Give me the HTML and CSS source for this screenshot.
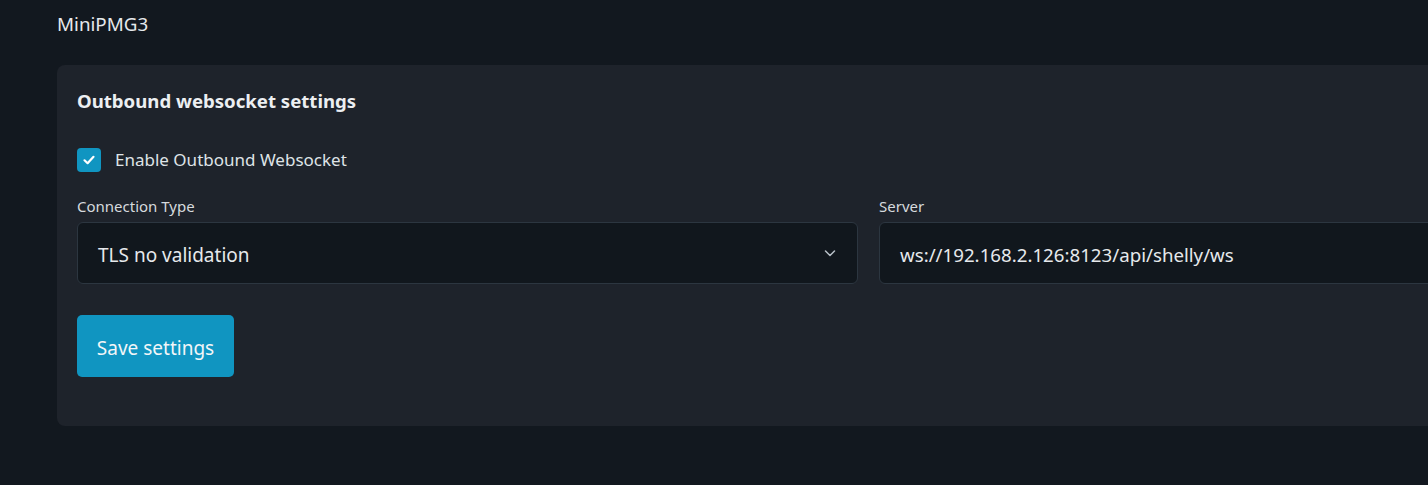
FILE: index.html
```html
<!DOCTYPE html>
<html>
<head>
<meta charset="utf-8">
<link rel="stylesheet" href="styles.css">
</head>
<body>
<main class="page">
  <h1 class="device-name">MiniPMG3</h1>
  <article class="card">
    <h2 class="card-title">Outbound websocket settings</h2>
    <label class="check">
      <span class="check-box">
        <svg width="14" height="14" viewBox="0 0 14 14"><path d="M2.5 7.3 L5.6 10.2 L11.5 3.8" fill="none" stroke="#fff" stroke-width="2.2" stroke-linecap="round" stroke-linejoin="round"/></svg>
      </span>
      <span class="check-label">Enable Outbound Websocket</span>
    </label>
    <div class="grid">
      <div class="field">
        <div class="field-label">Connection Type</div>
        <div class="control select">
          <span>TLS no validation</span>
          <svg class="chev" width="14" height="14" viewBox="0 0 14 14"><path d="M2.5 5 L7 9.5 L11.5 5" fill="none" stroke="#b8c0c8" stroke-width="1.5" stroke-linecap="round" stroke-linejoin="round"/></svg>
        </div>
      </div>
      <div class="field">
        <div class="field-label">Server</div>
        <div class="control server">
          <span>ws://192.168.2.126:8123/api/shelly/ws</span>
        </div>
      </div>
    </div>
    <button class="btn">Save settings</button>
  </article>
</main>
</body>
</html>
```

FILE: styles.css
```css
html, body {
  margin: 0;
  padding: 0;
  background: #12181f;
}
body {
  font-family: "Noto Sans", "Open Sans", sans-serif;
  color: #e3e6ea;
}
.page {
  padding: 0 0 0 57px;
  width: 1428px;
  height: 485px;
  box-sizing: border-box;
  overflow: hidden;
}
.device-name {
  margin: 0;
  font-size: 18.8px;
  font-weight: 400;
  line-height: 24px;
  padding-top: 12px;
  height: 65px;
  box-sizing: border-box;
  color: #e6e9ec;
}
.card {
  width: 1623px;
  box-sizing: border-box;
  background: #1e232b;
  border-radius: 8px;
  padding: 24px 20px 49px 20px;
}
.card-title {
  margin: 0;
  font-size: 18.6px;
  font-weight: 700;
  line-height: 24px;
  color: #eceff2;
}
.check {
  display: flex;
  align-items: center;
  gap: 14px;
  margin-top: 35px;
}
.check-box {
  width: 24px;
  height: 24px;
  border-radius: 4px;
  background: #1095c1;
  display: flex;
  align-items: center;
  justify-content: center;
}
.check-label {
  font-size: 17px;
  line-height: 24px;
  color: #dfe3e7;
}
.grid {
  display: grid;
  grid-template-columns: 781px 781px;
  column-gap: 21px;
  margin-top: 24px;
}
.field-label {
  font-size: 15px;
  line-height: 20px;
  color: #d6dade;
  margin-bottom: 6px;
}
.control {
  height: 62px;
  box-sizing: border-box;
  border: 1px solid #2c3640;
  border-radius: 6px;
  background: #11171d;
  display: flex;
  align-items: center;
  padding: 3px 20px 0 20px;
  font-size: 19px;
  color: #e6e9ec;
}
.server {
  font-size: 18.7px;
}
.select {
  justify-content: space-between;
}
.chev {
  margin-top: -3px;
}
.btn {
  margin-top: 31px;
  height: 62px;
  width: 157px;
  border: 0;
  border-radius: 5px;
  background: #1095c1;
  color: #f2f6f8;
  font-family: inherit;
  font-size: 19px;
  padding: 3px 0 0 0;
  display: block;
}
```
